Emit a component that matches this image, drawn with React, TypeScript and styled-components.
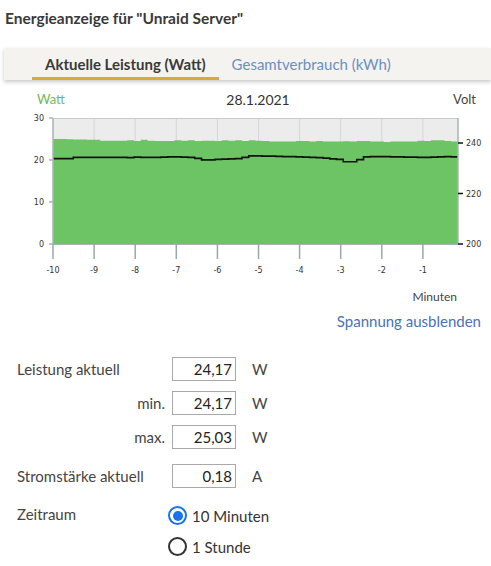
import React from "react";
import styled, { createGlobalStyle } from "styled-components";

const Global = createGlobalStyle`
  html, body { margin: 0; padding: 0; background: #fff; }
  body { font-family: Lato, "Open Sans", sans-serif; color: #333; }
`;

const Page = styled.div`
  width: 491px;
  height: 566px;
  overflow: hidden;
  position: relative;
`;

const Title = styled.h1`
  margin: 0;
  padding: 8px 0 0 5px;
  font-size: 15.5px;
  line-height: 20px;
  font-weight: 700;
  color: #3a3a3a;
`;

const TabBar = styled.div`
  margin: 20px 0 0 4px;
  height: 32px;
  background: #f4f3f0;
  box-shadow: 0 2px 4px rgba(0, 0, 0, 0.22);
  display: flex;
  align-items: stretch;
  padding-left: 28px;
`;

const Tab = styled.div<{ $active?: boolean }>`
  display: flex;
  align-items: center;
  padding: 0 13px;
  font-size: 15px;
  font-weight: ${(p) => (p.$active ? 700 : 400)};
  color: ${(p) => (p.$active ? "#3a3a3a" : "#6b8fc3")};
  border-bottom: 3px solid ${(p) => (p.$active ? "#dfa63c" : "transparent")};
  box-sizing: border-box;
  padding-top: 3px;
`;

const ChartHead = styled.div`
  display: flex;
  justify-content: space-between;
  align-items: center;
  margin-top: 11px;
  padding: 0 15px 0 37px;
  height: 16px;
  font-size: 13px;
`;

const AxisName = styled.span<{ $color: string }>`
  color: ${(p) => p.$color};
`;

const DateLabel = styled.span`
  color: #333;
  font-size: 14px;
  margin-left: -2px;
`;

const ChartSvg = styled.svg`
  display: block;
  width: 491px;
  height: 172px;
  margin-top: 2px;
`;

const Minutes = styled.div`
  text-align: right;
  padding-right: 34px;
  font-size: 12px;
  color: #444;
  margin-top: 8px;
  line-height: 16px;
`;

const LinkRow = styled.div`
  text-align: right;
  padding-right: 10px;
  margin-top: 6px;
  font-size: 15px;
  line-height: 20px;
  color: #4a72b4;
`;

const Form = styled.div`
  display: grid;
  grid-template-columns: 148px 64px auto;
  column-gap: 7px;
  padding-left: 17px;
  margin-top: 26px;
  align-items: center;
`;

const Label = styled.div<{ $right?: boolean; $gap?: number; $top?: boolean }>`
  font-size: 15px;
  color: #444;
  text-align: ${(p) => (p.$right ? "right" : "left")};
  margin-top: ${(p) => p.$gap ?? 0}px;
  align-self: ${(p) => (p.$top ? "start" : "center")};
`;

const ValueBox = styled.div<{ $gap?: number }>`
  height: 24px;
  box-sizing: border-box;
  border: 1px solid #a9a9a9;
  font-size: 15px;
  line-height: 22px;
  text-align: right;
  padding-right: 3px;
  color: #222;
  margin-top: ${(p) => p.$gap ?? 0}px;
`;

const Unit = styled.div<{ $gap?: number }>`
  font-size: 15px;
  color: #444;
  padding-left: 9px;
  margin-top: ${(p) => p.$gap ?? 0}px;
`;

const RadioGroup = styled.div<{ $gap?: number }>`
  display: flex;
  flex-direction: column;
  gap: 10px;
  margin-left: -4px;
  margin-top: ${(p) => p.$gap ?? 0}px;
  grid-column: 2 / 4;
`;

const RadioItem = styled.label`
  display: flex;
  align-items: center;
  gap: 5px;
  font-size: 15px;
  color: #333;
  height: 21px;
`;

const RadioMark = styled.span<{ $checked?: boolean }>`
  width: 19px;
  height: 19px;
  box-sizing: border-box;
  border-radius: 50%;
  border: 2px solid ${(p) => (p.$checked ? "#1a73e8" : "#333")};
  display: flex;
  align-items: center;
  justify-content: center;
  &::after {
    content: "";
    width: 10px;
    height: 10px;
    border-radius: 50%;
    background: ${(p) => (p.$checked ? "#1a73e8" : "transparent")};
  }
`;

// Plot geometry in page coordinates (svg viewBox starts at y=108)
const X0 = 53;
const X1 = 458;
const Y_TOP = 117;
const Y_BASE = 243;
const WATT_PX = (Y_BASE - Y_TOP) / 30;
const VOLT_PX = (Y_BASE - 142) / 40;

const watt = [
  25.0, 25.0, 24.95, 24.9, 24.9, 24.85, 24.85, 24.6, 24.6, 24.6, 24.6, 24.7,
  24.5, 24.8, 24.6, 24.5, 24.5, 24.5, 24.7, 24.6, 24.7, 24.5, 24.6, 24.6,
  24.5, 24.7, 24.6, 24.7, 24.5, 24.7, 24.6, 24.5, 24.4, 24.4, 24.4, 24.4,
  24.5, 24.5, 24.4, 24.5, 24.4, 24.4, 24.4, 24.45, 24.4, 24.5, 24.5, 24.4,
  24.4, 24.3, 24.4, 24.4, 24.4, 24.4, 24.6, 24.5, 24.7, 24.7, 24.5, 24.4,
];

const volt = [
  233.8, 233.8, 233.8, 234.3, 234.3, 234.3, 234.3, 234.3, 234.3, 234.3,
  234.3, 234.2, 234.4, 234.3, 234.3, 234.3, 234.4, 234.5, 234.5, 234.4,
  234.3, 233.9, 233.3, 233.3, 233.5, 233.6, 233.7, 233.8, 234.3, 234.9,
  234.9, 234.8, 234.8, 234.7, 234.6, 234.6, 234.5, 234.4, 234.3, 234.2,
  234.0, 233.7, 233.5, 232.6, 232.6, 233.4, 234.5, 234.6, 234.6, 234.6,
  234.5, 234.5, 234.4, 234.4, 234.3, 234.3, 234.4, 234.5, 234.6, 234.5,
];

const step = (X1 - X0) / watt.length;

function stepPath(values: number[], toY: (v: number) => number) {
  let d = `M${X0},${toY(values[0]).toFixed(2)}`;
  values.forEach((v, i) => {
    const y = toY(v).toFixed(2);
    if (i > 0) d += ` V${y}`;
    d += ` H${(X0 + (i + 1) * step).toFixed(2)}`;
  });
  return d;
}

const wattY = (w: number) => Y_BASE - w * WATT_PX;
const voltY = (v: number) => Y_BASE - (v - 200) * VOLT_PX;

const xTicks = [-10, -9, -8, -7, -6, -5, -4, -3, -2, -1];
const tickX = (t: number) => X0 + (t + 10) * 41.1;

function PowerChart() {
  const area = `${stepPath(watt, wattY)} V${Y_BASE} H${X0} Z`;
  const line = stepPath(volt, voltY);
  return (
    <ChartSvg viewBox="0 108 491 172">
      <rect x={X0} y={Y_TOP} width={X1 - X0} height={Y_BASE - Y_TOP} fill="#ececec" />
      {xTicks.slice(1).map((t) => (
        <line key={t} x1={tickX(t)} x2={tickX(t)} y1={Y_TOP} y2={Y_BASE} stroke="#d6d6d6" strokeWidth={1} />
      ))}
      <path d={area} fill="#6cc464" />
      <path d={line} fill="none" stroke="#111" strokeWidth={1.6} />
      <line x1={X0} x2={X1} y1={Y_TOP + 0.5} y2={Y_TOP + 0.5} stroke="#c3cbcb" strokeWidth={1} />
      <line x1={X0} x2={X0} y1={Y_TOP} y2={Y_BASE} stroke="#a8b4b4" strokeWidth={1.5} />
      <line x1={X1} x2={X1} y1={Y_TOP} y2={Y_BASE} stroke="#a8b4b4" strokeWidth={1.5} />
      <line x1={X0} x2={X1} y1={Y_BASE + 0.5} y2={Y_BASE + 0.5} stroke="#a8b4b4" strokeWidth={1} />
      {[30, 20, 10, 0].map((v) => (
        <g key={v}>
          <line x1={X0 - 4} x2={X0} y1={wattY(v)} y2={wattY(v)} stroke="#a8b4b4" strokeWidth={1.5} />
          <text x={X0 - 9} y={wattY(v) + 3} textAnchor="end" fontSize={8} fontFamily="DejaVu Sans, sans-serif" fill="#333">
            {v}
          </text>
        </g>
      ))}
      {[240, 220, 200].map((v) => (
        <g key={v}>
          <line x1={X1} x2={X1 + 5} y1={voltY(v)} y2={voltY(v)} stroke="#111" strokeWidth={1.5} />
          <text x={X1 + 8} y={voltY(v) + 3} fontSize={8} fontFamily="DejaVu Sans, sans-serif" fill="#333">
            {v}
          </text>
        </g>
      ))}
      {xTicks.map((t) => (
        <g key={t}>
          <line x1={tickX(t)} x2={tickX(t)} y1={Y_BASE} y2={Y_BASE + 15} stroke="#9aa8a8" strokeWidth={1.5} />
          <text x={tickX(t)} y={Y_BASE + 29} textAnchor="middle" fontSize={8} fontFamily="DejaVu Sans, sans-serif" fill="#333">
            {t}
          </text>
        </g>
      ))}
    </ChartSvg>
  );
}

export default function App() {
  return (
    <Page>
      <Global />
      <Title>Energieanzeige für "Unraid Server"</Title>
      <TabBar>
        <Tab $active>Aktuelle Leistung (Watt)</Tab>
        <Tab>Gesamtverbrauch (kWh)</Tab>
      </TabBar>
      <ChartHead>
        <AxisName $color="#74b95a">Watt</AxisName>
        <DateLabel>28.1.2021</DateLabel>
        <AxisName $color="#444">Volt</AxisName>
      </ChartHead>
      <PowerChart />
      <Minutes>Minuten</Minutes>
      <LinkRow>Spannung ausblenden</LinkRow>
      <Form>
        <Label>Leistung aktuell</Label>
        <ValueBox>24,17</ValueBox>
        <Unit>W</Unit>
        <Label $right $gap={10}>min.</Label>
        <ValueBox $gap={10}>24,17</ValueBox>
        <Unit $gap={10}>W</Unit>
        <Label $right $gap={10}>max.</Label>
        <ValueBox $gap={10}>25,03</ValueBox>
        <Unit $gap={10}>W</Unit>
        <Label $gap={15}>Stromstärke aktuell</Label>
        <ValueBox $gap={15}>0,18</ValueBox>
        <Unit $gap={15}>A</Unit>
        <Label $gap={17} $top>Zeitraum</Label>
        <RadioGroup $gap={17}>
          <RadioItem>
            <RadioMark $checked />
            10 Minuten
          </RadioItem>
          <RadioItem>
            <RadioMark />
            1 Stunde
          </RadioItem>
        </RadioGroup>
      </Form>
    </Page>
  );
}
